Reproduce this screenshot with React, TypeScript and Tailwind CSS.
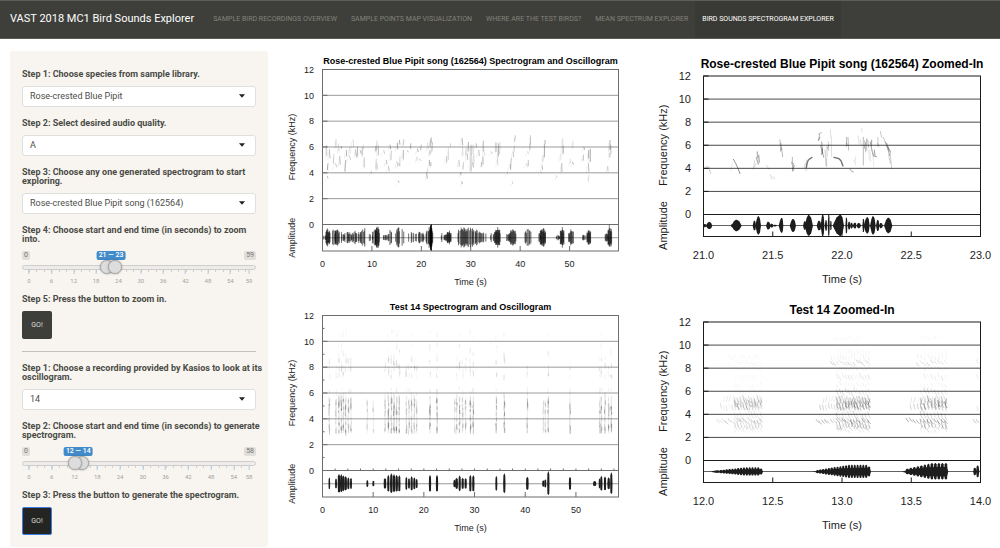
import { useState } from "react";
import type { ReactNode } from "react";

const FONT = "Roboto, 'Noto Sans', sans-serif";
const CHART_FONT = "'Liberation Sans', Arial, sans-serif";

const navItems = [
  "Sample Bird Recordings Overview",
  "Sample Points Map Visualization",
  "Where are the test birds?",
  "Mean Spectrum Explorer",
  "Bird Sounds Spectrogram Explorer",
];

function noise(n: number) {
  const v = Math.sin(n * 12.9898 + 4.137) * 43758.5453;
  return v - Math.floor(v);
}

/* ---------- Form controls ---------- */

function Field({ id, label, children }: { id: string; label: string; children: ReactNode }) {
  return (
    <div className="flex flex-col gap-[7px]">
      <label htmlFor={id} className="-mr-2 text-[9px] leading-[9px] font-bold text-[#4a4b46]">
        {label}
      </label>
      {children}
    </div>
  );
}

function SelectBox({ id, options }: { id: string; options: string[] }) {
  return (
    <div className="relative">
      <select
        id={id}
        className="block h-[21px] w-full appearance-none rounded-[3px] border border-[#dfdfdb] bg-white pr-6 pl-[7px] text-[9px] text-[#4d4e49] outline-none"
      >
        {options.map((o) => (
          <option key={o}>{o}</option>
        ))}
      </select>
      <svg viewBox="0 0 6 4" className="pointer-events-none absolute top-2 right-[11px] h-1 w-1.5" aria-hidden="true">
        <path d="M0 .2H6L3 3.8Z" fill="#1f1f1c" />
      </svg>
    </div>
  );
}

const rangeClass =
  "pointer-events-none absolute inset-x-0 top-[9px] m-0 h-[14px] w-full appearance-none bg-transparent outline-none [&::-webkit-slider-thumb]:pointer-events-auto [&::-webkit-slider-thumb]:size-[14px] [&::-webkit-slider-thumb]:appearance-none [&::-webkit-slider-thumb]:rounded-full [&::-webkit-slider-thumb]:border [&::-webkit-slider-thumb]:border-[#aaaaaa] [&::-webkit-slider-thumb]:bg-[#dddddd] [&::-webkit-slider-thumb]:shadow-[0_0_2px_rgba(0,0,0,0.35)]";

function RangeSlider({ id, max, from, to, firstOnTop }: { id: string; max: number; from: number; to: number; firstOnTop?: boolean }) {
  const [low, setLow] = useState(from);
  const [high, setHigh] = useState(to);
  const majors: number[] = [];
  for (let v = 0; v < max; v += 6) majors.push(v);
  majors.push(max);
  const minors: number[] = [];
  for (let v = 0; v < max; v += 2) minors.push(v);
  return (
    <div className="relative h-8">
      <div className="flex justify-between text-[7px] leading-[9px] text-[#777777]">
        <span className="rounded-[2px] bg-[#e1ddd9] px-[2px]">0</span>
        <span className="rounded-[2px] bg-[#e1ddd9] px-[2px]">{max}</span>
      </div>
      <div className="absolute inset-x-0 top-[14px] h-[5px] rounded-full border border-[#cfcecb] bg-[#edecea]" />
      <div className="absolute inset-x-[7px] top-0 h-full">
        <output
          htmlFor={id}
          className="absolute top-0 -translate-x-1/2 rounded-[2px] bg-[#428bca] px-[2px] text-[7px] leading-[9px] font-medium whitespace-nowrap text-white"
          style={{ left: `${((low + high) / 2 / max) * 100}%` }}
        >
          {low} — {high}
        </output>
        {minors.map((v) => (
          <span key={v} className="absolute top-[19px] h-[2px] w-px bg-[#cfcfcb]" style={{ left: `${(v / max) * 100}%` }} />
        ))}
        {majors.map((v) => (
          <span
            key={v}
            className="absolute top-[19px] flex -translate-x-1/2 flex-col items-center text-[6px] leading-[8px] text-[#a3a29e]"
            style={{ left: `${(v / max) * 100}%` }}
          >
            <span className="mb-[3px] h-1 w-px bg-[#a9c9e2]" />
            {v}
          </span>
        ))}
      </div>
      <input
        id={id}
        type="range"
        min={0}
        max={max}
        value={low}
        onChange={(e) => setLow(Math.min(+e.target.value, high))}
        className={firstOnTop ? `z-10 ${rangeClass}` : rangeClass}
      />
      <input
        type="range"
        min={0}
        max={max}
        value={high}
        aria-label="End time"
        onChange={(e) => setHigh(Math.max(+e.target.value, low))}
        className={rangeClass}
      />
    </div>
  );
}

/* ---------- Chart frame ---------- */

type Frame = {
  x: number;
  right: number;
  top: number;
  zero: number;
  bottom: number;
  title: number;
  titleY: number;
  text: number;
  labelX: number;
  axisX: number;
  tickY: number;
  timeY: number;
  line: string;
  grid: string;
};

const overview: Frame = {
  x: 42.5, right: 338.5, top: 19.5, zero: 174.5, bottom: 201,
  title: 9, titleY: 14, text: 9, labelX: 34, axisX: 15, tickY: 217, timeY: 235,
  line: "#6d6d6d", grid: "#9a9a9a",
};

const zoomed: Frame = {
  x: 63.5, right: 340.5, top: 26, zero: 164.5, bottom: 186.5,
  title: 12, titleY: 18, text: 11, labelX: 51, axisX: 27, tickY: 209, timeY: 233,
  line: "#1c1c1c", grid: "#4a4a4a",
};

type ChartProps = {
  title: string;
  frame: Frame;
  start: number;
  end: number;
  step: number;
  decimals?: number;
  minor?: boolean;
  children: ReactNode;
};

function Chart({ title, frame: f, start, end, step, decimals = 0, minor, children }: ChartProps) {
  const px = (t: number) => f.x + ((t - start) / (end - start)) * (f.right - f.x);
  const py = (k: number) => f.zero - (k / 12) * (f.zero - f.top);
  const ticks: number[] = [];
  for (let t = start; t <= end; t += step) ticks.push(t);
  const mid = (f.zero + f.bottom) / 2;
  const centre = (f.x + f.right) / 2;
  return (
    <svg viewBox="0 0 360 246" className="block h-auto w-full" role="img" aria-label={title} fontFamily={CHART_FONT} fontSize={f.text} fill="#1d1d1d">
      <text x={centre} y={f.titleY} textAnchor="middle" fontWeight="bold" fontSize={f.title} fill="#000">
        {title}
      </text>
      {[0, 2, 4, 6, 8, 10, 12].map((k) => (
        <g key={k}>
          <text x={f.labelX} y={py(k) + f.text * 0.36} textAnchor="end">
            {k}
          </text>
          {k > 0 && k < 12 && <line x1={f.x} x2={f.right} y1={py(k)} y2={py(k)} stroke={f.grid} />}
          <line x1={f.x} x2={f.x + 5} y1={py(k)} y2={py(k)} stroke={f.line} />
        </g>
      ))}
      {minor &&
        [1, 3, 5, 7, 9, 11].map((k) => <line key={k} x1={f.x} x2={f.x + 2} y1={py(k)} y2={py(k)} stroke={f.line} />)}
      {minor &&
        Array.from({ length: 23 }, (_, i) => (i + 1) * 2.5).map((t) => (
          <line key={t} x1={px(t)} x2={px(t)} y1={f.zero} y2={f.zero - 2} stroke={f.line} />
        ))}
      {ticks.map((t) => (
        <g key={t}>
          <line x1={px(t)} x2={px(t)} y1={f.bottom} y2={f.bottom - 5} stroke={f.line} />
          <text x={px(t)} y={f.tickY} textAnchor="middle">
            {t.toFixed(decimals)}
          </text>
        </g>
      ))}
      <line x1={f.x} x2={f.right} y1={mid} y2={mid} stroke={f.line} strokeWidth={0.7} />
      <line x1={f.x} x2={f.right} y1={f.zero} y2={f.zero} stroke={f.line} />
      <rect x={f.x} y={f.top} width={f.right - f.x} height={f.bottom - f.top} fill="none" stroke={f.line} />
      <text x={centre} y={f.timeY} textAnchor="middle">
        Time (s)
      </text>
      <text transform={`translate(${f.axisX} ${(f.top + f.zero) / 2}) rotate(-90)`} textAnchor="middle">
        Frequency (kHz)
      </text>
      <text transform={`translate(${f.axisX} ${mid}) rotate(-90)`} textAnchor="middle">
        Amplitude
      </text>
      {children}
    </svg>
  );
}

/* ---------- Sound data, drawn at three units per chart unit ---------- */

// [from, to, half height, density]
const pipitBursts: number[][] = [
  [131, 138, 12, 0.5], [138, 150, 30, 1], [158, 167, 31, 0.5], [165, 178, 28, 0.8], [178, 187, 18, 0.6],
  [190, 214, 20, 0.4], [214, 240, 22, 0.45], [240, 262, 32, 0.4], [268, 278, 17, 0.4], [278, 288, 28, 0.5],
  [286, 298, 37, 1], [309, 322, 12, 0.5], [325, 337, 24, 0.55], [347, 360, 35, 0.75], [360, 374, 32, 0.35],
  [378, 402, 24, 0.22], [406, 432, 20, 0.4], [438, 446, 26, 0.6], [445, 459, 39, 1], [484, 486, 20, 0.6],
  [492, 500, 12, 0.7], [500, 514, 23, 1], [534, 560, 35, 0.75], [560, 582, 35, 0.4], [582, 600, 26, 0.5],
  [600, 618, 20, 0.4], [632, 635, 14, 0.5], [640, 648, 20, 0.5], [646, 661, 34, 1], [680, 690, 17, 0.6],
  [690, 708, 28, 0.8], [735, 753, 28, 0.6], [772, 782, 18, 0.4], [781, 797, 31, 1], [829, 840, 9, 0.6],
  [841, 853, 34, 1], [866, 881, 28, 0.6], [908, 919, 11, 0.6], [921, 933, 25, 1], [974, 985, 16, 0.6], [984, 995, 34, 1],
];

function PipitOverview() {
  const mid = 563;
  let wave = "";
  pipitBursts.forEach(([a, b, h, d], i) => {
    const stepX = d > 0.9 ? 1.2 : 1.6;
    for (let x = a, n = 0; x <= b; x += stepX, n++) {
      const r = noise(i * 31 + n);
      if (r > d + 0.12) continue;
      const rel = (x - a) / (b - a);
      const shape = 0.66 + 0.34 * Math.sin(Math.PI * Math.min(1, rel));
      const hh = h * shape * (0.5 + 0.5 * noise(n * 7 + i));
      wave += `M${x.toFixed(1)} ${(mid - hh).toFixed(1)}V${(mid + hh * 0.95).toFixed(1)}`;
    }
  });
  // [x, top, bottom, lean]
  const marks: number[][] = [
    [140, 285, 318, 0], [148, 298, 325, 2], [144, 340, 360, -2], [162, 312, 340, -2], [168, 268, 292, 0], [166, 340, 352, 5],
    [175, 280, 304, 2], [179, 318, 344, 2], [183, 288, 296, 2], [197, 330, 364, -2], [199, 300, 320, 1], [209, 290, 312, 2],
    [208, 316, 330, 4], [219, 268, 292, 2], [226, 298, 318, 2], [233, 290, 322, -2], [240, 300, 312, 4], [247, 292, 318, 1],
    [253, 322, 352, 0], [250, 284, 300, 1], [287, 288, 304, 0], [291, 272, 300, -1], [289, 326, 356, -2], [291, 340, 358, 2],
    [295, 286, 316, 0], [311, 300, 312, 3], [319, 330, 344, 2], [325, 348, 364, 3], [334, 302, 330, -1], [330, 284, 298, 2],
    [350, 334, 350, 4], [355, 340, 348, 6], [352, 278, 298, 1], [358, 270, 284, 2], [360, 318, 344, 0], [370, 300, 328, 0],
    [371, 268, 286, 0], [381, 302, 306, 5], [393, 280, 296, -2], [411, 320, 332, 0], [412, 296, 306, 3], [418, 326, 332, 4],
    [424, 284, 300, -2], [443, 278, 298, 2], [448, 330, 348, 2], [452, 266, 290, -2], [454, 262, 280, 1], [457, 276, 304, -1],
    [450, 300, 314, 0], [453, 336, 348, 0], [442, 354, 368, 2], [500, 318, 338, 0], [505, 296, 330, 1], [511, 280, 290, 1],
    [537, 330, 350, 1], [546, 264, 286, 2], [548, 290, 318, 1], [551, 336, 358, -2], [558, 294, 316, 0], [565, 276, 304, 0],
    [562, 310, 330, 1], [573, 284, 365, 0], [579, 284, 312, 0], [581, 312, 340, 1], [578, 338, 352, 3], [588, 280, 292, 2],
    [596, 300, 318, 2], [604, 336, 350, 1], [610, 272, 304, 0], [612, 300, 318, 2], [609, 320, 344, 0], [633, 304, 312, 4],
    [648, 276, 306, 0], [655, 280, 320, 0], [652, 322, 346, 2], [660, 276, 300, 0], [657, 300, 312, 2], [690, 342, 360, 2],
    [694, 324, 356, -2], [699, 304, 322, 2], [703, 286, 304, 0], [706, 256, 274, -2], [737, 340, 348, 4], [745, 330, 348, 0],
    [743, 304, 312, 2], [750, 280, 300, 0], [751, 256, 284, 1], [786, 344, 360, 2], [789, 316, 334, 0], [794, 280, 322, -1],
    [795, 270, 280, 1], [842, 312, 330, 1], [848, 264, 310, 1], [850, 286, 312, 0], [845, 340, 366, 1], [870, 326, 340, 2],
    [877, 336, 344, 4], [879, 272, 292, 0], [910, 314, 332, 0], [912, 290, 300, 1], [926, 300, 325, 0], [925, 340, 366, 2],
    [931, 296, 336, 0], [983, 348, 364, 1], [990, 270, 300, 0], [992, 284, 312, 1], [989, 310, 322, 1],
    [273, 362, 372, 2], [440, 368, 386, 2], [542, 366, 376, 1], [681, 366, 374, 2], [782, 364, 370, 3], [927, 374, 392, -2],
    [142, 378, 386, 2], [355, 392, 398, 2], [545, 394, 402, 2], [697, 394, 402, 1], [829, 376, 384, 2],
  ];
  return (
    <g transform="scale(.33333)" fill="none">
      {marks.map(([x, a, b, l], i) => (
        <g key={i} stroke="#555">
          <path d={`M${x} ${a}L${x + l} ${b}`} strokeWidth={2.6} opacity={0.2 + 0.36 * noise(i)} />
          <path d={`M${x + 4 * noise(i + 0.5) - 5} ${a + 8}l${-l} ${(b - a) * 0.9}`} strokeWidth={2} opacity={0.14} />
        </g>
      ))}
      <path d={wave} stroke="#000" strokeWidth={1.7} />
      <path d="M452 526V600M454 523V602" stroke="#000" strokeWidth={3} />
      <path d="M988 523V560" stroke="#444" strokeWidth={2} />
    </g>
  );
}

// [x, half height, half width]
const testCalls: number[][] = [
  [148, 19, 2.5], [168, 16, 3], [177, 30, 4], [184, 29, 4], [190, 25, 4], [197, 23, 4], [205, 19, 3.5], [213, 18, 3],
  [262, 11, 3], [280, 9, 3], [315, 17, 4], [325, 27, 3.5], [334, 32, 4], [342, 29, 4], [350, 27, 4], [358, 26, 3.5],
  [379, 21, 3], [387, 17, 3], [395, 23, 3.5], [403, 19, 3.5], [410, 15, 3], [450, 27, 3.5], [471, 27, 3.5],
  [524, 12, 4], [530, 18, 4], [539, 25, 3.5], [548, 18, 3.5], [557, 17, 3.5], [571, 27, 3.5], [580, 26, 3.5],
  [649, 24, 3], [673, 32, 3.5], [742, 21, 4], [790, 10, 3.5], [796, 13, 3], [805, 39, 3.5], [870, 21, 3.5],
  [944, 8, 5], [959, 16, 3], [964, 24, 3.5], [975, 22, 3.5], [986, 19, 4], [994, 35, 3.5],
];

function TestOverview() {
  const mid = 563;
  const specks: ReactNode[] = [];
  testCalls.forEach(([x, h], i) => {
    const power = Math.min(1, h / 28);
    if (h < 9) return;
    // [top, bottom, strength, count]
    const bands = [
      [376, 402, 0.48, 4], [304, 350, 0.48, 6], [352, 372, 0.22, 2], [272, 302, 0.2, 2], [182, 240, 0.22, 4], [140, 180, 0.12, 2], [96, 120, 0.1, 1],
    ];
    bands.forEach(([top, bottom, strength, count], b) => {
      if (b > 2 && h < 15) return;
      if (b > 4 && power < 0.8) return;
      for (let n = 0; n < count; n++) {
        const s = i * 97 + b * 13 + n;
        const y = top + (bottom - top) * noise(s);
        const len = 6 + 12 * noise(s + 0.4);
        const dx = (noise(s + 0.7) - 0.5) * 3;
        specks.push(
          <path
            key={`${i}-${b}-${n}`}
            d={`M${x + dx} ${y}v${len}`}
            stroke="#444"
            strokeWidth={2.4}
            opacity={strength * power * (0.3 + 0.7 * noise(s + 0.2))}
          />,
        );
      }
    });
    specks.push(<path key={`c${i}`} d={`M${x} ${300 + (1 - power) * 20}V412`} stroke="#666" strokeWidth={3} opacity={0.18 * power} />);
  });
  return (
    <g transform="scale(.33333)">
      {specks}
      {testCalls.map(([x, h, w]) => (
        <path
          key={x}
          d={`M${x - w} ${mid}L${x - w * 0.8} ${mid - h * 0.75}L${x} ${mid - h}L${x + w * 0.8} ${mid - h * 0.75}L${x + w} ${mid}L${x + w * 0.8} ${mid + h * 0.75}L${x} ${mid + h * 0.9}L${x - w * 0.8} ${mid + h * 0.75}Z`}
        />
      ))}
    </g>
  );
}

// [from, peak, to, half height]
const pipitBlobs: number[][] = [
  [175, 179, 184, 5], [182, 193, 202, 11], [257, 262, 268, 5], [259, 274, 290, 18], [323, 328, 333, 15], [331, 340, 348, 28],
  [363, 369, 377, 12], [374, 379, 386, 6], [384, 389, 396, 3], [401, 410, 415, 23], [434, 444, 453, 20], [474, 479, 484, 13],
  [479, 491, 504, 32], [515, 522, 529, 15], [527, 533, 538, 34], [539, 543, 546, 16], [548, 551, 554, 32], [555, 557, 560, 14],
  [563, 586, 597, 33], [601, 604, 607, 24], [608, 612, 616, 12], [615, 619, 624, 9], [623, 630, 634, 9], [634, 641, 648, 8],
  [652, 655, 658, 20], [656, 667, 674, 25], [675, 684, 692, 28], [693, 698, 703, 17], [702, 707, 714, 8], [717, 730, 742, 24],
];

function PipitZoom() {
  const mid = 527;
  const shades: [string, number, number][] = [
    ["M183 350L193 352M192 355L197 370", 3, 0.25],
    ["M265 328L272 340L279 355L285 371", 3, 0.5],
    ["M262 340L258 362", 2, 0.15],
    ["M334 322L340 342M337 306L338 322M341 316L343 336", 4, 0.35],
    ["M329 330L325 358M333 340L328 352", 2, 0.25],
    ["M365 346L372 358M376 374L381 388M384 380L390 387", 2.5, 0.2],
    ["M405 270L407 300M408 280L413 320M410 295L406 304", 3, 0.32],
    ["M442 322V342M440 336L446 362M446 340L442 364M449 346L443 358", 3, 0.32],
    ["M484 352L488 334L492 328L501 322", 4, 0.6],
    ["M481 340L478 352M485 330L483 362", 2, 0.3],
    ["M520 272L524 254M521 252L529 248M525 262L522 270", 3, 0.35],
    ["M530 276L532 304L536 322M533 296L529 314M527 288L533 310", 3, 0.4],
    ["M540 300L543 346M546 290V320M550 276L551 302M552 284L547 296M545 325V350", 2.4, 0.28],
    ["M556 240L558 262M559 262L560 320", 2, 0.22],
    ["M567 322L582 326L588 332L594 348", 4, 0.65],
    ["M605 262L604 290M609 262L611 300M604 278L608 286", 3, 0.3],
    ["M615 357L620 364L625 366", 3, 0.4],
    ["M632 320L630 334M628 330L632 345", 2, 0.18],
    ["M639 258L643 282M650 236L651 246M646 270L650 288", 2, 0.22],
    ["M655 262V345M659 272L662 306M665 266V300M668 270L671 292M662 278L658 295", 3, 0.3],
    ["M676 276L681 302L686 318L694 320M680 270L679 290M688 300L690 318", 3.5, 0.38],
    ["M675 300L677 335M683 310L687 350M671 300L673 330", 1.8, 0.18],
    ["M699 262V290M697 280L702 288M706 244L710 262M715 262L720 276", 2.4, 0.3],
    ["M721 276L728 296L734 316M725 280L731 300M729 290L736 306", 3, 0.4],
    ["M735 300L740 356M731 314L736 340", 2.4, 0.28],
  ];
  return (
    <g transform="translate(5 0) scale(.33333)">
      {shades.map(([d, w, o], i) => (
        <path key={i} d={d} fill="none" stroke="#222" strokeWidth={w} strokeLinecap="round" strokeLinejoin="round" opacity={o} />
      ))}
      {pipitBlobs.map(([a, p, b, h]) => (
        <path
          key={a}
          d={`M${a} ${mid}L${(a + p) / 2} ${mid - h * 0.74}L${p - 1.5} ${mid - h}H${p + 1.5}L${(b + p) / 2 + 1} ${mid - h * 0.74}L${b} ${mid}L${(b + p) / 2 + 1} ${mid + h * 0.7}L${p + 1.5} ${mid + h * 0.94}H${p - 1.5}L${(a + p) / 2} ${mid + h * 0.7}Z`}
        />
      ))}
    </g>
  );
}

// [from, to, first half height, last half height, tone, full bands from]
const testPhrases: number[][] = [
  [216, 352, 4, 13, 0.65, 264],
  [514, 676, 5, 21, 1, 574],
  [783, 908, 9, 26, 1, 815],
  [986, 1006, 12, 21, 0.8, 1000],
];

function TestZoom() {
  const mid = 527;
  const calls: ReactNode[] = [];
  const beads: ReactNode[] = [];
  testPhrases.forEach(([a, b, h0, h1, tone, full], i) => {
    const pitch = i === 2 ? 10.5 : 8.6;
    for (let x = a, n = 0; x < b - 3; x += pitch, n++) {
      const rel = (x - a) / (b - a);
      const grow = Math.min(1, rel * 1.7);
      const h = (h0 + (h1 - h0) * grow) * (rel > 0.93 ? 0.75 : 1);
      const w = pitch * 0.56;
      const cx = x + w * 0.7;
      beads.push(
        <path
          key={`${i}-${n}`}
          d={`M${cx - w} ${mid}L${cx - w * 0.6} ${mid - h * 0.85}L${cx - 1} ${mid - h}H${cx + 1}L${cx + w * 0.6} ${mid - h * 0.85}L${cx + w} ${mid}L${cx + w * 0.6} ${mid + h * 0.8}L${cx + 1} ${mid + h * 0.9}H${cx - 1}L${cx - w * 0.6} ${mid + h * 0.8}Z`}
        />,
      );
      const loud = x >= full;
      const add = (y: number, dx: number, dy: number, sw: number, o: number) => {
        const s = i * 71 + n * 5 + y;
        calls.push(
          <path
            key={`${i}-${n}-${y}`}
            d={`M${cx - dx / 2} ${y + (noise(s) - 0.5) * 9}l${dx * 0.4} ${dy * 0.65}l${dx * 0.6} ${dy * 0.35}`}
            stroke="#333"
            strokeWidth={sw}
            opacity={o * tone * (0.4 + 0.7 * noise(s + 0.3))}
          />,
        );
      };
      add(370, 8, 10, 2.6, 0.45);
      if (x > a + 10) add(304, -5, 16, 2, loud ? 0.3 : 0.22);
      if (x > a + 6) add(326, 3, 14, 2.2, 0.32);
      if (loud) {
        add(350, 7, 20, 2.2, 0.3);
        add(374, 7, 22, 2.8, 0.38);
        add(386, -4, 10, 2.2, 0.3);
        add(398, 5, 8, 1.8, 0.25);
        add(303, 7, 20, 3, 0.38);
        add(314, -4, 14, 2.4, 0.32);
        add(318, 7, 18, 3.2, 0.44);
        add(330, 4, 14, 2, 0.3);
        add(280, 6, 14, 1.8, tone > 0.7 ? 0.3 : 0.12);
        add(262, 4, 10, 1.6, 0.14);
      }
      if (rel > 0.25) {
        add(196, 8, 9, 1.8, tone > 0.7 ? 0.32 : 0.2);
        add(180, 3, 10, 1.5, 0.18);
      }
      if (rel > 0.35) {
        add(236, 5, 14, 1.6, tone > 0.7 ? 0.24 : 0.12);
        add(212, 4, 8, 1.4, 0.16);
        if (tone > 0.7) add(162, 3, 14, 1.4, 0.13);
      }
      if (tone === 1 && rel > 0.3 && rel < 0.8) add(122, 3, 8, 1.4, 0.1);
    }
    if (i < 3) {
      beads.push(
        <path key={`core${i}`} d={`M${a - 12} ${mid}L${a + 10} ${mid - h0 * 0.7}L${(a + b) / 2} ${mid - h1 * 0.5}L${b - 4} ${mid - h1 * 0.55}L${b + 2} ${mid}L${b - 4} ${mid + h1 * 0.55}L${(a + b) / 2} ${mid + h1 * 0.5}L${a + 10} ${mid + h0 * 0.7}Z`} />,
      );
    }
  });
  return (
    <g transform="translate(5 0) scale(.33333)">
      <g fill="none" strokeLinecap="round">{calls}</g>
      <path d="M200 526L216 523V531L200 528Z" />
      {beads}
    </g>
  );
}

/* ---------- Page ---------- */

export default function App() {
  return (
    <div className="bg-white" style={{ fontFamily: FONT }}>
      <nav className="flex h-[39px] items-stretch border-t border-b border-t-[#5b5d57] border-b-[#5b5c56] bg-[#3e3f3a]">
        <a href="#" className="flex items-center pr-3 pl-[10px] text-[11px] whitespace-nowrap text-white">
          VAST 2018 MC1 Bird Sounds Explorer
        </a>
        {navItems.map((item, i) => (
          <a
            key={item}
            href="#"
            className={
              i === navItems.length - 1
                ? "flex items-center bg-[#393a35] px-[7px] text-[7px] whitespace-nowrap text-white uppercase"
                : "flex items-center px-[7px] text-[7px] whitespace-nowrap text-[#83827b] uppercase"
            }
          >
            {item}
          </a>
        ))}
      </nav>

      <main className="flex items-start gap-3 pl-[10px]">
        <aside className="mt-3 flex w-[258px] shrink-0 flex-col gap-3 rounded-[3px] bg-[#f8f5f0] px-3 pt-[19px] pb-3">
          <Field id="species" label="Step 1: Choose species from sample library.">
            <SelectBox id="species" options={["Rose-crested Blue Pipit"]} />
          </Field>
          <Field id="quality" label="Step 2: Select desired audio quality.">
            <SelectBox id="quality" options={["A", "B", "C"]} />
          </Field>
          <Field id="song" label="Step 3: Choose any one generated spectrogram to start exploring.">
            <SelectBox id="song" options={["Rose-crested Blue Pipit song (162564)"]} />
          </Field>
          <Field id="zoom" label="Step 4: Choose start and end time (in seconds) to zoom into.">
            <RangeSlider id="zoom" max={59} from={21} to={23} />
          </Field>
          <Field id="go-zoom" label="Step 5: Press the button to zoom in.">
            <button id="go-zoom" className="h-7 w-[30px] rounded-[2px] bg-[#3e3f3a] text-[7px] text-[#dedfda]">
              GO!
            </button>
          </Field>
          <hr className="border-t border-[#c4c1bd]" />
          <Field id="recording" label="Step 1: Choose a recording provided by Kasios to look at its oscillogram.">
            <SelectBox id="recording" options={["14"]} />
          </Field>
          <Field id="generate" label="Step 2: Choose start and end time (in seconds) to generate spectrogram.">
            <RangeSlider id="generate" max={58} from={12} to={14} firstOnTop />
          </Field>
          <Field id="go-generate" label="Step 3: Press the button to generate the spectrogram.">
            <button id="go-generate" className="h-7 w-[30px] rounded-[2px] border border-[#3b7de0] bg-[#242522] text-[7px] text-[#dedfda]">
              GO!
            </button>
          </Field>
        </aside>

        <section className="mt-[11px] grid min-w-0 flex-1 grid-cols-2">
          <Chart title="Rose-crested Blue Pipit song (162564) Spectrogram and Oscillogram" frame={overview} start={0} end={59.9} step={10}>
            <PipitOverview />
          </Chart>
          <Chart title="Rose-crested Blue Pipit song (162564) Zoomed-In" frame={zoomed} start={21} end={23} step={0.5} decimals={1}>
            <PipitZoom />
          </Chart>
          <Chart title="Test 14 Spectrogram and Oscillogram" frame={overview} start={0} end={58.4} step={10} minor>
            <TestOverview />
          </Chart>
          <Chart title="Test 14 Zoomed-In" frame={zoomed} start={12} end={14} step={0.5} decimals={1}>
            <TestZoom />
          </Chart>
        </section>
      </main>
    </div>
  );
}
